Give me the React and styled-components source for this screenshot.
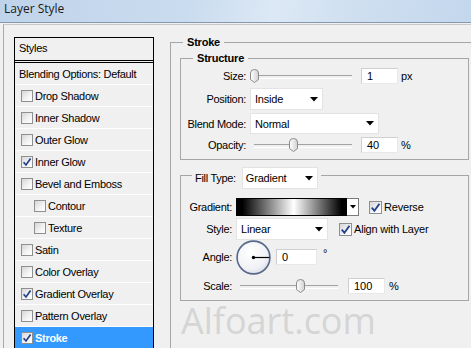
import React from 'react';
import styled, { createGlobalStyle } from 'styled-components';

const Global = createGlobalStyle`
  html, body { margin: 0; padding: 0; overflow: hidden; background: #f0f0f0; }
  body { font-family: "Liberation Sans", Arial, sans-serif; font-size: 11px; color: #000; }
  * { box-sizing: border-box; }
`;

const Window = styled.div`
  width: 471px;
  height: 348px;
  overflow: hidden;
  background: #f0f0f0;
  display: flex;
  flex-direction: column;
`;

const TitleBar = styled.div`
  flex: none;
  height: 23px;
  padding: 0 0 0 4px;
  border-bottom: 1px solid #8598ad;
  background: linear-gradient(100deg, #bfd3ea 0%, #cadcef 40%, #dce8f5 58%, #cfdff0 75%, #c3d7ed 100%);
  font-family: "Open Sans", "Noto Sans", sans-serif;
  font-size: 12px;
  line-height: 17px;
  color: #1a1a1a;
`;

const Body = styled.div`
  flex: 1;
  display: flex;
  align-items: stretch;
  margin: 1px 0 0 3px;
  border-top: 1px solid #c9c9c9;
  border-left: 1px solid #a9a9a9;
  min-height: 0;
`;

const StyleList = styled.div`
  flex: none;
  width: 140px;
  margin: 12px 0 0 10px;
  border: 1px solid #000;
  border-bottom: none;
  letter-spacing: -0.3px;
`;

const ListHeader = styled.div`
  height: 25px;
  padding-left: 4px;
  line-height: 21px;
  border-bottom: 3px double #000;
`;

const ListRow = styled.div`
  display: flex;
  align-items: center;
  height: 22px;
  padding-left: ${p => p.$pad}px;
  border-bottom: 1px solid #fdfdfd;
  background: ${p => (p.$selected ? '#3399ff' : 'transparent')};
  color: ${p => (p.$selected ? '#fff' : '#000')};
  font-weight: ${p => (p.$selected ? 'bold' : 'normal')};
`;

const Box = styled.span`
  flex: none;
  display: inline-flex;
  align-items: center;
  justify-content: center;
  width: ${p => p.$size}px;
  height: ${p => p.$size}px;
  margin-right: ${p => p.$mr}px;
  margin-left: ${p => p.$ml}px;
  border: 1px solid #8e8f8f;
  background: linear-gradient(135deg, #d6d6d6 0%, #f4f4f4 60%, #ffffff 100%);
`;

const Check = ({ on, size = 12, mr = 1, ml = 0 }) => (
  <Box $size={size} $mr={mr} $ml={ml}>
    {on && (
      <svg width={size - 2} height={size - 2} viewBox="0 0 10 10">
        <path d="M1.6 5.2 L4 8 L8.6 1.6" stroke="#23418a" strokeWidth="1.7" fill="none" />
      </svg>
    )}
  </Box>
);

const RightCol = styled.div`
  flex: none;
  margin-left: 16px;
`;

const Group = styled.fieldset`
  margin: ${p => p.$mt || 0}px 0 0 0;
  min-width: 0;
  padding: ${p => p.$pad};
  border: 1px solid #a6a6a6;
  ${p => (p.$open ? 'border-bottom: none; height: 340px;' : '')}
  width: ${p => (p.$w ? `${p.$w}px` : 'auto')};
`;

const Legend = styled.legend`
  margin-left: ${p => p.$ml}px;
  padding: 0 ${p => p.$px}px;
  font-weight: bold;
  line-height: 14px;
  letter-spacing: -0.2px;
`;

const LegendInner = styled.span`
  display: flex;
  align-items: flex-start;
  height: 16px;
  font-weight: normal;
`;

const Row = styled.div`
  display: flex;
  align-items: center;
  height: ${p => p.$h}px;
  margin-top: ${p => p.$mt || 0}px;
`;

const Label = styled.span`
  flex: none;
  width: ${p => (p.$w ? `${p.$w}px` : 'auto')};
  margin-right: ${p => (p.$w ? 4 : 0)}px;
  text-align: right;
  letter-spacing: -0.3px;
  line-height: ${p => p.$lh || 14}px;
  white-space: nowrap;
`;

const SliderWrap = styled.div`
  position: relative;
  flex: none;
  width: 106px;
  height: 16px;
  &::before {
    content: '';
    position: absolute;
    left: 4px;
    right: 4px;
    top: 7px;
    height: 2px;
    border-top: 1px solid #a2a2a2;
    border-bottom: 1px solid #ffffff;
  }
`;

const Thumb = styled.svg`
  position: absolute;
  top: 1px;
  left: ${p => 4 + (p.$pos / 100) * 98 - 4.5}px;
`;

const Slider = ({ pos }) => (
  <SliderWrap>
    <Thumb $pos={pos} width="9" height="14" viewBox="0 0 9 14">
      <defs>
        <linearGradient id="tg" x1="0" y1="0" x2="1" y2="0">
          <stop offset="0" stopColor="#ffffff" />
          <stop offset="1" stopColor="#d2d2d2" />
        </linearGradient>
      </defs>
      <path d="M0.5 4 Q0.5 0.5 4.5 0.5 Q8.5 0.5 8.5 4 L8.5 10.5 L4.5 13.5 L0.5 10.5 Z" fill="url(#tg)" stroke="#8c8c8c" />
    </Thumb>
  </SliderWrap>
);

const Field = styled.div`
  flex: none;
  width: ${p => p.$w}px;
  height: 16px;
  margin-left: ${p => p.$ml}px;
  padding-left: 5px;
  background: #fff;
  border: 1px solid;
  border-color: #cfcfcf #e8e8e8 #e8e8e8 #cfcfcf;
  line-height: 14px;
`;

const Unit = styled.span`
  margin-left: ${p => p.$ml}px;
  align-self: ${p => (p.$top ? 'flex-start' : 'center')};
  margin-top: ${p => (p.$top ? 7 : 0)}px;
`;

const SelectBox = styled.div`
  flex: none;
  display: flex;
  align-items: center;
  justify-content: space-between;
  width: ${p => p.$w}px;
  height: ${p => p.$h}px;
  margin-left: ${p => p.$ml || 0}px;
  margin-bottom: ${p => p.$mb || 0}px;
  padding: 0 4px 0 ${p => p.$pl || 4}px;
  background: #fff;
  border: 1px solid #e3e3e3;
  letter-spacing: -0.2px;
`;

const Arrow = () => (
  <svg width="8" height="5" viewBox="0 0 8 5">
    <path d="M0 0 H8 L4 4.5 Z" fill="#000" />
  </svg>
);

const Select = ({ w, h, ml, mb, pl, children }) => (
  <SelectBox $w={w} $h={h} $ml={ml} $mb={mb} $pl={pl}>
    <span>{children}</span>
    <Arrow />
  </SelectBox>
);

const Swatch = styled.div`
  flex: none;
  width: 111px;
  height: 18px;
  border: 1px solid #000;
  background: linear-gradient(to right, #000 0%, #000 5%, #fff 52%, #000 96%, #000 100%);
`;

const SwatchBtn = styled.div`
  flex: none;
  display: flex;
  align-items: center;
  justify-content: center;
  width: 12px;
  height: 18px;
  border: 1px solid #7a7a7a;
  border-left: none;
  background: #fff;
`;

const SmallArrow = () => (
  <svg width="6" height="4" viewBox="0 0 6 4">
    <path d="M0 0 H6 L3 3.5 Z" fill="#000" />
  </svg>
);

const CheckLabel = styled.span`
  margin-left: 2px;
  letter-spacing: -0.2px;
`;

const Dial = () => (
  <svg width="35" height="35" viewBox="0 0 35 35">
    <defs>
      <radialGradient id="dg" cx="0.4" cy="0.35" r="0.7">
        <stop offset="0" stopColor="#ffffff" />
        <stop offset="0.7" stopColor="#f1f2f6" />
        <stop offset="1" stopColor="#dcdfe8" />
      </radialGradient>
    </defs>
    <circle cx="17.5" cy="17.5" r="16.4" fill="url(#dg)" stroke="#56688c" strokeWidth="1.6" />
    <line x1="17.5" y1="17.5" x2="33.5" y2="17.5" stroke="#000" strokeWidth="1.2" />
    <circle cx="17.5" cy="17.5" r="1.7" fill="#000" />
  </svg>
);

const Watermark = styled.div`
  margin: 0 0 0 1px;
  font-family: "Open Sans", "Noto Sans", sans-serif;
  font-size: 36px;
  line-height: 40px;
  color: #d5d5d5;
  letter-spacing: 0;
`;

const styles = [
  { name: 'Drop Shadow', on: false },
  { name: 'Inner Shadow', on: false },
  { name: 'Outer Glow', on: false },
  { name: 'Inner Glow', on: true },
  { name: 'Bevel and Emboss', on: false },
  { name: 'Contour', on: false, indent: true },
  { name: 'Texture', on: false, indent: true },
  { name: 'Satin', on: false },
  { name: 'Color Overlay', on: false },
  { name: 'Gradient Overlay', on: true },
  { name: 'Pattern Overlay', on: false },
  { name: 'Stroke', on: true, selected: true },
];

export default function App() {
  return (
    <Window>
      <Global />
      <TitleBar>Layer Style</TitleBar>
      <Body>
        <StyleList>
          <ListHeader>Styles</ListHeader>
          <ListRow $pad={4}>Blending Options: Default</ListRow>
          {styles.map(s => (
            <ListRow key={s.name} $pad={s.indent ? 19 : 6} $selected={s.selected}>
              <Check on={s.on} size={12} mr={2} />
              {s.name}
            </ListRow>
          ))}
        </StyleList>
        <RightCol>
          <Group $mt={10} $w={311} $pad="2px 11px 0 9px" $open>
            <Legend $ml={3} $px={4}>Stroke</Legend>
            <Group $pad="3px 0 6px 0">
              <Legend $ml={12} $px={4}>Structure</Legend>
              <Row $h={16}>
                <Label $w={65}>Size:</Label>
                <Slider pos={0} />
                <Field $w={37} $ml={5}>1</Field>
                <Unit $ml={3}>px</Unit>
              </Row>
              <Row $h={22} $mt={4}>
                <Label $w={65}>Position:</Label>
                <Select w={73} h={22}>Inside</Select>
              </Row>
              <Row $h={21} $mt={3}>
                <Label $w={65}>Blend Mode:</Label>
                <Select w={129} h={21}>Normal</Select>
              </Row>
              <Row $h={16} $mt={3}>
                <Label $w={65}>Opacity:</Label>
                <Slider pos={40} />
                <Field $w={37} $ml={5}>40</Field>
                <Unit $ml={3}>%</Unit>
              </Row>
            </Group>
            <Group $mt={7} $pad="15px 0 6px 0">
              <Legend $ml={11} $px={3}>
                <LegendInner>
                  <Label $lh={22}>Fill Type:</Label>
                  <Select w={76} h={22} ml={6} mb={-6} pl={3}>Gradient</Select>
                </LegendInner>
              </Legend>
              <Row $h={18}>
                <Label $w={51}>Gradient:</Label>
                <Swatch />
                <SwatchBtn><SmallArrow /></SwatchBtn>
                <Check on size={13} mr={0} ml={10} />
                <CheckLabel>Reverse</CheckLabel>
              </Row>
              <Row $h={22} $mt={2}>
                <Label $w={51}>Style:</Label>
                <Select w={92} h={22}>Linear</Select>
                <Check on size={13} mr={0} ml={11} />
                <CheckLabel>Align with Layer</CheckLabel>
              </Row>
              <Row $h={34} $mt={0}>
                <Label $w={51}>Angle:</Label>
                <Dial />
                <Field $w={41} $ml={5}>0</Field>
                <Unit $ml={6} $top>°</Unit>
              </Row>
              <Row $h={16} $mt={4}>
                <Label $w={51}>Scale:</Label>
                <Slider pos={62} />
                <Field $w={37} $ml={6}>100</Field>
                <Unit $ml={4}>%</Unit>
              </Row>
            </Group>
            <Watermark>Alfoart.com</Watermark>
          </Group>
        </RightCol>
      </Body>
    </Window>
  );
}
